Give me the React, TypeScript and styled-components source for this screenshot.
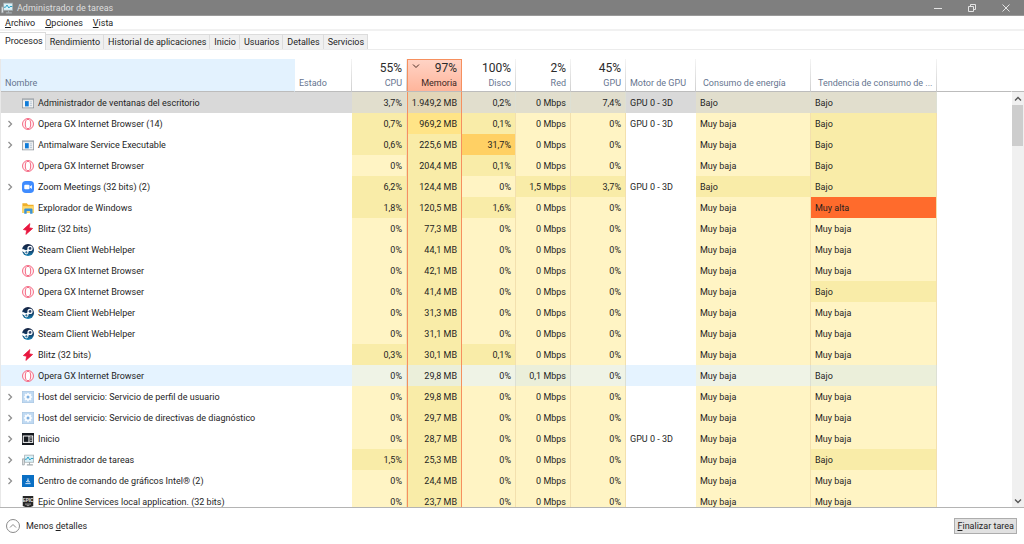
import React from "react";
import styled, { createGlobalStyle, css } from "styled-components";

const Global = createGlobalStyle`
  *, *::before, *::after { box-sizing: border-box; }
  html, body { margin: 0; padding: 0; background: #fff; }
  body, button { font-family: Roboto, "Open Sans", "Liberation Sans", sans-serif; font-size: 9px; line-height: 12px; color: #1e1e1e; }
  button { margin: 0; padding: 0; border: 0; background: none; }
  u { text-underline-offset: 1px; }
`;

type Tone = "none" | "light" | "mid" | "warm" | "hot" | "alert";
type RowState = "normal" | "selected" | "hover";
type IconName =
  | "window" | "opera" | "zoom" | "folder" | "blitz" | "steam"
  | "gear" | "start" | "monitor" | "intel" | "epic";

const tones: Record<RowState, Record<Tone, string>> = {
  normal: { none: "#ffffff", light: "#fff4c4", mid: "#f9eca8", warm: "#ffe487", hot: "#ffd064", alert: "#ff6b2c" },
  selected: { none: "#d9d9d9", light: "#e1decd", mid: "#e1decd", warm: "#e2d6b8", hot: "#e2d6b8", alert: "#e2d6b8" },
  hover: { none: "#e5f3ff", light: "#eff3e6", mid: "#ebefda", warm: "#ebefda", hot: "#ebefda", alert: "#ebefda" },
};

const Window = styled.div`
  display: flex;
  flex-direction: column;
  height: 100vh;
  background: #fff;
  overflow: hidden;
`;

const TitleBar = styled.header`
  display: flex;
  align-items: center;
  gap: 4px;
  flex: none;
  height: 16px;
  padding: 0 1px;
  background: #7f7f7f;
  border-bottom: 1px solid #9a9a9a;
  color: #dedede;
`;

const Title = styled.h1`
  flex: 1;
  margin: 0;
  font-size: 9px;
  line-height: 12px;
  font-weight: 400;
`;

const CaptionButtons = styled.div`
  display: flex;
`;

const CaptionButton = styled.button`
  display: grid;
  place-items: center;
  width: 34px;
  height: 14px;
  color: #e4e4e4;
`;

const MenuBar = styled.nav`
  display: flex;
  flex: none;
  gap: 10px;
  height: 15px;
  padding: 1px 5px 0;
  border-bottom: 2px solid #f1f1f1;
`;

const TabBar = styled.div`
  display: flex;
  align-items: flex-end;
  flex: none;
  height: 19px;
  border-bottom: 1px solid #ececec;
`;

const Tab = styled.button<{ $active?: boolean }>`
  height: 15px;
  padding: 0 3px 0 4px;
  border: 1px solid #dcdcdc;
  border-left-width: 0;
  border-bottom: 0;
  background: #f0f0f0;
  ${(p) =>
    p.$active &&
    css`
      height: 18px;
      padding: 0 2px 2px 5px;
      margin-bottom: -1px;
      background: #fff;
    `}
`;

const Panel = styled.main`
  display: flex;
  flex: 1;
  min-height: 0;
  padding-top: 9px;
  border-bottom: 1px solid #b4b4b4;
`;

const ListView = styled.div`
  flex: 1;
  min-width: 0;
  overflow: hidden;
  border-left: 1px solid #e8e8e8;
`;

const ProcessTable = styled.table`
  width: 100%;
  table-layout: fixed;
  border-collapse: separate;
  border-spacing: 0;
`;

const HeadCell = styled.th<{ $numeric?: boolean; $kind?: "name" | "sorted" | "energy" }>`
  position: relative;
  height: 33px;
  padding: 0 4px 2px;
  vertical-align: bottom;
  text-align: ${(p) => (p.$numeric ? "right" : "left")};
  font-weight: 400;
  color: #66758f;
  white-space: nowrap;
  overflow: hidden;
  border-right: 1px solid transparent;
  border-bottom: 1px solid #bcbcbc;
  background: linear-gradient(#f4f4f4, #cfcfcf) right / 1px 100% no-repeat border-box;
  ${(p) =>
    p.$kind === "name" &&
    css`
      background: #e3f2fe;
    `}
  ${(p) =>
    p.$kind === "energy" &&
    css`
      padding-left: 7px;
      padding-right: 1px;
    `}
  ${(p) =>
    p.$kind === "sorted" &&
    css`
      background: linear-gradient(#ffd3c5, #ffb59b);
      border-top: 1px solid #f6905f;
      border-right-color: #f6905f;
      box-shadow: inset 1px 0 #f6905f;
      color: #3c2723;
    `}
  &:last-child { background: none; }
`;

const Load = styled.span`
  display: block;
  margin-bottom: 2px;
  font-size: 12px;
  line-height: 14px;
  color: #2a2a2a;
`;

const SortMark = styled.svg`
  position: absolute;
  top: 3px;
  left: 5px;
`;

const Row = styled.tr<{ $state: RowState }>`
  background: ${(p) => tones[p.$state].none};
`;

const Cell = styled.td<{ $tone?: Tone; $state: RowState; $numeric?: boolean; $sorted?: boolean }>`
  height: 21px;
  padding: 0 4px;
  text-align: ${(p) => (p.$numeric ? "right" : "left")};
  white-space: nowrap;
  background: ${(p) => tones[p.$state][p.$tone ?? "none"]};
  border-right: 1px solid
    ${(p) => (p.$sorted ? "#f6905f" : !p.$tone || p.$tone === "none" ? "transparent" : p.$state === "normal" ? "#f3e0ae" : "#dde0d4")};
  ${(p) => p.$sorted && css`box-shadow: inset 1px 0 #f6905f;`}
`;

const NameBox = styled.div`
  display: flex;
  align-items: center;
  gap: 4px;
`;

const Expander = styled.button`
  display: grid;
  place-items: center;
  width: 9px;
  height: 12px;
  margin-right: 4px;
`;

const Indent = styled.span`
  width: 13px;
`;

const ScrollColumn = styled.div`
  display: flex;
  flex-direction: column;
  flex: none;
  width: 12px;
`;

const ScrollHead = styled.div`
  flex: none;
  height: 33px;
  border-bottom: 1px solid #bcbcbc;
`;

const ScrollTrack = styled.div`
  display: flex;
  flex-direction: column;
  flex: 1;
  background: #f0f0f0;
`;

const ScrollButton = styled.button`
  display: grid;
  place-items: center;
  width: 12px;
  height: 13px;
`;

const ScrollThumb = styled.div`
  height: 41px;
  margin-right: 1px;
  background: #cdcdcd;
`;

const ScrollSpace = styled.div`
  flex: 1;
`;

const Footer = styled.footer`
  display: flex;
  align-items: center;
  justify-content: space-between;
  flex: none;
  height: 36px;
  padding: 0 7px 0 6px;
`;

const DetailsButton = styled.button`
  display: flex;
  align-items: center;
  gap: 6px;
`;

const EndButton = styled.button`
  height: 16px;
  padding: 0 2px;
  border: 1px solid #adadad;
  background: #e1e1e1;
`;

const LogoText = styled.text`
  font-family: "Liberation Sans", sans-serif;
  font-size: 6px;
  font-weight: 700;
  fill: #f0f0f0;
  text-anchor: middle;
`;

function Icon({ name }: { name: IconName }) {
  const p = { width: 12, height: 12, viewBox: "0 0 16 16", "aria-hidden": true } as const;
  switch (name) {
    case "window":
      return (
        <svg {...p}>
          <rect x="0.5" y="2.5" width="15" height="12" fill="#f4f4f4" stroke="#8d949b" />
          <path d="M1 3.5h14" stroke="#a9b0b6" strokeWidth="1.4" />
          <rect x="4" y="5.5" width="5" height="7" fill="#0f7bd8" />
          <path d="M10.5 6.5h3M10.5 9h3M10.5 11.5h3" stroke="#9fb6c9" />
        </svg>
      );
    case "opera":
      return (
        <svg {...p}>
          <circle cx="8" cy="8" r="7.3" fill="#fff3f5" stroke="#f4657f" strokeWidth="1.3" />
          <ellipse cx="8" cy="8" rx="3.6" ry="6.2" fill="#fff" stroke="#f4657f" strokeWidth="1.3" />
        </svg>
      );
    case "zoom":
      return (
        <svg {...p}>
          <rect width="16" height="16" rx="5" fill="#3f8cff" />
          <rect x="3" y="5" width="7" height="6" rx="1.4" fill="#fff" />
          <path d="M10.6 7.2 13.2 5.2v5.6l-2.6-2z" fill="#fff" />
        </svg>
      );
    case "folder":
      return (
        <svg {...p}>
          <path d="M0.5 1.5h6l1.5 2h7.5v11h-15z" fill="#f0b02a" />
          <path d="M0.5 5.5h15v9h-15z" fill="#ffd869" />
          <path d="M3 15.5V10q0-1.5 1.5-1.5h8q1.5 0 1.5 1.5v5.5h-3.2v-3.5h-4.6v3.5z" fill="#3b93d6" />
        </svg>
      );
    case "blitz":
      return (
        <svg {...p}>
          <path d="M10.5 0.8 1.8 8.7l4.4 1L5.2 15.2 14.2 7.3l-4.6-1z" fill="#e8173f" stroke="#e8173f" strokeLinejoin="round" />
        </svg>
      );
    case "steam":
      return (
        <svg {...p}>
          <defs>
            <linearGradient id="steamFill" x1="0" y1="0" x2="0" y2="1">
              <stop offset="0" stopColor="#14203f" />
              <stop offset="0.55" stopColor="#123e68" />
              <stop offset="1" stopColor="#1b87b8" />
            </linearGradient>
          </defs>
          <circle cx="8" cy="8" r="8" fill="url(#steamFill)" />
          <path d="M0 7.8 5.7 10.6l4.6-3.8" stroke="#fff" strokeWidth="3.2" fill="none" />
          <circle cx="10.7" cy="5.9" r="2.7" fill="#2b426a" stroke="#fff" strokeWidth="1.6" />
          <circle cx="5.8" cy="11" r="2.1" fill="#3d769c" stroke="#fff" strokeWidth="1.3" />
        </svg>
      );
    case "gear":
      return (
        <svg {...p}>
          <rect x="0.5" y="0.5" width="15" height="15" fill="#bfd9f2" stroke="#a9c7e4" />
          <path d="M8 2.5v11M2.5 8h11M4.1 4.1l7.8 7.8M11.9 4.1l-7.8 7.8" stroke="#f9fcff" strokeWidth="2.2" />
          <circle cx="8" cy="8" r="3.2" fill="#7fb0e0" stroke="#f9fcff" strokeWidth="2.4" />
        </svg>
      );
    case "start":
      return (
        <svg {...p}>
          <rect width="16" height="16" fill="#15191f" />
          <rect x="1.7" y="4" width="12.6" height="8.5" fill="none" stroke="#fff" strokeWidth="1.3" />
          <path d="M9.3 4v8.5M11 6.6h2M11 9.6h2" stroke="#fff" strokeWidth="1.3" />
        </svg>
      );
    case "monitor":
      return (
        <svg {...p}>
          <rect x="3.5" y="1.5" width="12" height="9.5" fill="#d9f1f8" stroke="#a3acb0" />
          <path d="M4 7h2l2-3 2.5 4 1.5-2h3" stroke="#2a9fc4" strokeWidth="1.3" fill="none" />
          <path d="M10 11v3M6.5 14.5h8" stroke="#a3acb0" strokeWidth="1.4" />
          <path d="M0.5 6.5h2.5v8h-2.5z" fill="#ededed" stroke="#8f989c" />
        </svg>
      );
    case "intel":
      return (
        <svg {...p}>
          <rect width="16" height="16" fill="#0a6fc4" />
          <path d="M8 4.5v5.5M5.5 9 8 7.5l2.8 2.2M4.5 11.5h7" stroke="#e4f2ff" strokeWidth="1.2" fill="none" />
        </svg>
      );
    case "epic":
      return (
        <svg {...p}>
          <path d="M1 0h14v13.2L8 16 1 13.2z" fill="#262626" />
          <LogoText x="8" y="8">EPIC</LogoText>
          <path d="M4 10.8h8M6.3 12.8h3.4" stroke="#c4c4c4" />
        </svg>
      );
  }
}

function Chevron({ dir, color = "#8f8f8f", size = 8 }: { dir: "up" | "down" | "right"; color?: string; size?: number }) {
  const d = { up: "M1 5.5 4 2.5l3 3", down: "M1 2.5l3 3 3-3", right: "M2.5 1l3 3-3 3" }[dir];
  return (
    <svg width={size} height={size} viewBox="0 0 8 8" fill="none" stroke={color} strokeWidth="1.3" aria-hidden>
      <path d={d} />
    </svg>
  );
}

interface Process {
  name: string;
  icon: IconName;
  group?: boolean;
  state?: RowState;
  cpu?: string;
  mem: string;
  disk?: string;
  net?: string;
  gpu?: string;
  engine?: boolean;
  power?: string;
  trend?: string;
}

const processes: Process[] = [
  { name: "Administrador de ventanas del escritorio", icon: "window", state: "selected", cpu: "3,7%", mem: "1.949,2 MB", disk: "0,2%", gpu: "7,4%", engine: true, power: "Bajo", trend: "Bajo" },
  { name: "Opera GX Internet Browser (14)", icon: "opera", group: true, cpu: "0,7%", mem: "969,2 MB", disk: "0,1%", engine: true, trend: "Bajo" },
  { name: "Antimalware Service Executable", icon: "window", group: true, cpu: "0,6%", mem: "225,6 MB", disk: "31,7%", trend: "Bajo" },
  { name: "Opera GX Internet Browser", icon: "opera", mem: "204,4 MB", disk: "0,1%", trend: "Bajo" },
  { name: "Zoom Meetings (32 bits) (2)", icon: "zoom", group: true, cpu: "6,2%", mem: "124,4 MB", net: "1,5 Mbps", gpu: "3,7%", engine: true, power: "Bajo", trend: "Bajo" },
  { name: "Explorador de Windows", icon: "folder", cpu: "1,8%", mem: "120,5 MB", disk: "1,6%", trend: "Muy alta" },
  { name: "Blitz (32 bits)", icon: "blitz", mem: "77,3 MB" },
  { name: "Steam Client WebHelper", icon: "steam", mem: "44,1 MB" },
  { name: "Opera GX Internet Browser", icon: "opera", mem: "42,1 MB" },
  { name: "Opera GX Internet Browser", icon: "opera", mem: "41,4 MB", trend: "Bajo" },
  { name: "Steam Client WebHelper", icon: "steam", mem: "31,3 MB" },
  { name: "Steam Client WebHelper", icon: "steam", mem: "31,1 MB" },
  { name: "Blitz (32 bits)", icon: "blitz", cpu: "0,3%", mem: "30,1 MB", disk: "0,1%" },
  { name: "Opera GX Internet Browser", icon: "opera", state: "hover", mem: "29,8 MB", net: "0,1 Mbps", trend: "Bajo" },
  { name: "Host del servicio: Servicio de perfil de usuario", icon: "gear", group: true, mem: "29,8 MB" },
  { name: "Host del servicio: Servicio de directivas de diagnóstico", icon: "gear", group: true, mem: "29,7 MB" },
  { name: "Inicio", icon: "start", group: true, mem: "28,7 MB", engine: true },
  { name: "Administrador de tareas", icon: "monitor", group: true, cpu: "1,5%", mem: "25,3 MB", trend: "Bajo" },
  { name: "Centro de comando de gráficos Intel® (2)", icon: "intel", group: true, mem: "24,4 MB" },
  { name: "Epic Online Services local application. (32 bits)", icon: "epic", mem: "23,7 MB" },
];

const columnWidths = [294, 57, 55, 55, 54, 55, 55, 70, 115, 126];

const amount = (v: string) => parseFloat(v.replace(".", "").replace(",", "."));

function usageTone(v: string): Tone {
  const n = amount(v);
  return n === 0 ? "light" : n > 25 ? "hot" : "mid";
}

function memoryTone(v: string): Tone {
  return amount(v) > 500 ? "warm" : "mid";
}

function energyTone(v: string): Tone {
  return v === "Muy alta" ? "alert" : v === "Bajo" ? "mid" : "light";
}

function ProcessRow({ p }: { p: Process }) {
  const s = p.state ?? "normal";
  const { cpu = "0%", disk = "0%", net = "0 Mbps", gpu = "0%", power = "Muy baja", trend = "Muy baja" } = p;
  return (
    <Row $state={s}>
      <Cell $state={s}>
        <NameBox>
          {p.group ? (
            <Expander aria-label={`Expandir ${p.name}`}>
              <Chevron dir="right" />
            </Expander>
          ) : (
            <Indent />
          )}
          <Icon name={p.icon} />
          <span>{p.name}</span>
        </NameBox>
      </Cell>
      <Cell $state={s} />
      <Cell $state={s} $numeric $tone={usageTone(cpu)}>{cpu}</Cell>
      <Cell $state={s} $numeric $sorted $tone={memoryTone(p.mem)}>{p.mem}</Cell>
      <Cell $state={s} $numeric $tone={usageTone(disk)}>{disk}</Cell>
      <Cell $state={s} $numeric $tone={usageTone(net)}>{net}</Cell>
      <Cell $state={s} $numeric $tone={usageTone(gpu)}>{gpu}</Cell>
      <Cell $state={s}>{p.engine ? "GPU 0 - 3D" : ""}</Cell>
      <Cell $state={s} $tone={energyTone(power)}>{power}</Cell>
      <Cell $state={s} $tone={energyTone(trend)}>{trend}</Cell>
      <Cell $state="normal" />
    </Row>
  );
}

export default function App() {
  return (
    <>
      <Global />
      <Window>
        <TitleBar>
          <Icon name="monitor" />
          <Title>Administrador de tareas</Title>
          <CaptionButtons>
            <CaptionButton aria-label="Minimizar">
              <svg width="8" height="8" viewBox="0 0 8 8" stroke="currentColor"><path d="M0 4.5h8" /></svg>
            </CaptionButton>
            <CaptionButton aria-label="Restaurar">
              <svg width="8" height="8" viewBox="0 0 8 8" stroke="currentColor" fill="none"><path d="M0.5 2.5h5v5h-5zM2.5 2V0.5h5v5H6" /></svg>
            </CaptionButton>
            <CaptionButton aria-label="Cerrar">
              <svg width="8" height="8" viewBox="0 0 8 8" stroke="currentColor"><path d="M0.5 0.5l7 7M7.5 0.5l-7 7" /></svg>
            </CaptionButton>
          </CaptionButtons>
        </TitleBar>
        <MenuBar>
          <button><u>A</u>rchivo</button>
          <button><u>O</u>pciones</button>
          <button><u>V</u>ista</button>
        </MenuBar>
        <TabBar role="tablist">
          <Tab role="tab" aria-selected $active>Procesos</Tab>
          {["Rendimiento", "Historial de aplicaciones", "Inicio", "Usuarios", "Detalles", "Servicios"].map((t) => (
            <Tab role="tab" aria-selected={false} key={t}>{t}</Tab>
          ))}
        </TabBar>
        <Panel>
          <ListView>
            <ProcessTable>
              <colgroup>
                {columnWidths.map((w, i) => (
                  <col key={i} width={w} />
                ))}
                <col />
              </colgroup>
              <thead>
                <tr>
                  <HeadCell $kind="name">Nombre</HeadCell>
                  <HeadCell>Estado</HeadCell>
                  <HeadCell $numeric><Load>55%</Load>CPU</HeadCell>
                  <HeadCell $numeric $kind="sorted" aria-sort="descending">
                    <SortMark width="8" height="6" viewBox="0 0 8 6" fill="none" stroke="#4a2c24">
                      <path d="M1 1.5l3 3 3-3" />
                    </SortMark>
                    <Load>97%</Load>Memoria
                  </HeadCell>
                  <HeadCell $numeric><Load>100%</Load>Disco</HeadCell>
                  <HeadCell $numeric><Load>2%</Load>Red</HeadCell>
                  <HeadCell $numeric><Load>45%</Load>GPU</HeadCell>
                  <HeadCell>Motor de GPU</HeadCell>
                  <HeadCell $kind="energy">Consumo de energía</HeadCell>
                  <HeadCell $kind="energy">Tendencia de consumo de ...</HeadCell>
                  <HeadCell />
                </tr>
              </thead>
              <tbody>
                {processes.map((p, i) => (
                  <ProcessRow key={i} p={p} />
                ))}
              </tbody>
            </ProcessTable>
          </ListView>
          <ScrollColumn>
            <ScrollHead />
            <ScrollTrack>
              <ScrollButton aria-label="Subir"><Chevron dir="up" color="#555" /></ScrollButton>
              <ScrollThumb />
              <ScrollSpace />
              <ScrollButton aria-label="Bajar"><Chevron dir="down" color="#555" /></ScrollButton>
            </ScrollTrack>
          </ScrollColumn>
        </Panel>
        <Footer>
          <DetailsButton>
            <svg width="14" height="14" viewBox="0 0 14 14" fill="none" stroke="#8a8a8a" aria-hidden>
              <circle cx="7" cy="7" r="6.5" />
              <path d="M4 8.5l3-3 3 3" />
            </svg>
            <span>Menos <u>d</u>etalles</span>
          </DetailsButton>
          <EndButton><u>F</u>inalizar tarea</EndButton>
        </Footer>
      </Window>
    </>
  );
}
